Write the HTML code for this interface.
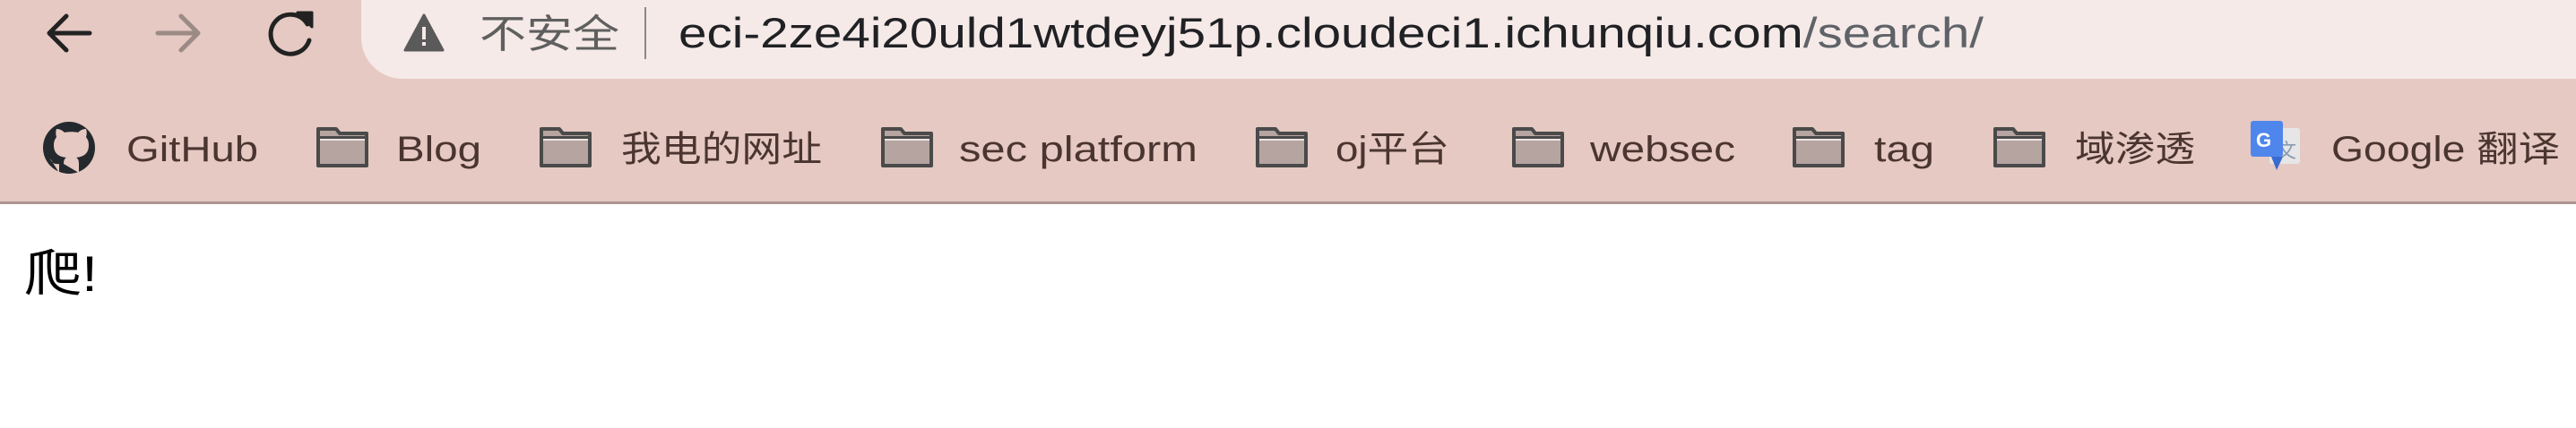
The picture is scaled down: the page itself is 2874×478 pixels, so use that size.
<!DOCTYPE html>
<html><head><meta charset="utf-8"><style>
html,body{margin:0;padding:0;width:2874px;height:478px;overflow:hidden;background:#fff}
svg{display:block}
text{font-family:"Liberation Sans","Noto Sans CJK SC",sans-serif}
</style></head><body>
<svg width="2874" height="478" viewBox="0 0 2874 478" xmlns="http://www.w3.org/2000/svg">
<defs>
<g id="fold"><path d="M3 6 h20 l4 5 h30 v36 h-54 z" fill="#b6a4a0" stroke="#4a4a4a" stroke-width="4" stroke-linejoin="round"/><path d="M3 16 h54" stroke="#4a4a4a" stroke-width="4"/><path d="M5 18 h50" stroke="#efe4e1" stroke-width="2"/></g>
</defs>
<rect x="0" y="0" width="2874" height="227" fill="#e5c9c2"/>
<rect x="0" y="225" width="2874" height="3" fill="#ad9691"/>
<!-- address bar -->
<rect x="403" y="-60" width="2600" height="148" rx="46" fill="#f5eae8"/>
<!-- nav icons -->
<g fill="none" stroke="#222" stroke-width="5" stroke-linecap="round" stroke-linejoin="round">
<path d="M100 37 H56 M74 18 L55 37 L74 56"/>
</g>
<g fill="none" stroke="#9c8a86" stroke-width="5" stroke-linecap="round" stroke-linejoin="round">
<path d="M176 37 H220 M202 18 L221 37 L202 56"/>
</g>
<path d="M343 27 A22 22 0 1 0 345 45" fill="none" stroke="#222" stroke-width="5" stroke-linecap="round"/>
<path d="M332 14 L348 14 L348 30 Z" fill="#222" stroke="#222" stroke-width="3" stroke-linejoin="round"/>
<!-- warning -->
<path d="M473 17 L494 56 H452 Z" fill="#5a5a5a" stroke="#5a5a5a" stroke-width="3" stroke-linejoin="round"/>
<rect x="471" y="30" width="4" height="14" fill="#f5eae8"/>
<rect x="471" y="47" width="4" height="4" fill="#f5eae8"/>
<text x="535" y="53" font-size="44" fill="#5f5f5f" textLength="156" lengthAdjust="spacingAndGlyphs">不安全</text>
<rect x="719" y="8" width="2" height="58" fill="#888"/>
<text x="757" y="53" font-size="47" fill="#202124" textLength="1456" lengthAdjust="spacingAndGlyphs"><tspan>eci-2ze4i20uld1wtdeyj51p.cloudeci1.ichunqiu.com</tspan><tspan fill="#5f6368">/search/</tspan></text>
<!-- bookmarks -->
<circle cx="77" cy="165" r="29" fill="#24292e"/>
<path d="M66 193 v-10 c-7 1 -9 -3 -10 -6 M88 193 v-10 c0-4 -1-6 -3-7 c8-1 14-4 14-14 c0-4 -1-6 -3-9 c1-3 1-6 0-9 c-3 0 -6 1-9 4 c-4-1 -11-1 -15 0 c-3-3 -6-4 -9-4 c-1 3-1 6 0 9 c-2 3-3 5-3 9 c0 10 6 13 14 14 c-2 1-3 3-3 7" fill="#e5c9c2"/>
<g font-size="40" fill="#4b3530">
<text x="141" y="180" textLength="147" lengthAdjust="spacingAndGlyphs">GitHub</text>
<use href="#fold" x="352" y="138"/>
<text x="442" y="180" textLength="95" lengthAdjust="spacingAndGlyphs">Blog</text>
<use href="#fold" x="601" y="138"/>
<text x="693" y="180" textLength="224" lengthAdjust="spacingAndGlyphs">我电的网址</text>
<use href="#fold" x="982" y="138"/>
<text x="1070" y="180" textLength="266" lengthAdjust="spacingAndGlyphs">sec platform</text>
<use href="#fold" x="1400" y="138"/>
<text x="1490" y="180" textLength="127" lengthAdjust="spacingAndGlyphs">oj平台</text>
<use href="#fold" x="1686" y="138"/>
<text x="1774" y="180" textLength="162" lengthAdjust="spacingAndGlyphs">websec</text>
<use href="#fold" x="1999" y="138"/>
<text x="2091" y="180" textLength="67" lengthAdjust="spacingAndGlyphs">tag</text>
<use href="#fold" x="2223" y="138"/>
<text x="2315" y="180" textLength="134" lengthAdjust="spacingAndGlyphs">域渗透</text>
<rect x="2532" y="143" width="34" height="40" rx="3" fill="#e6e6e6"/>
<text x="2540" y="176" font-size="22" fill="#8a9bb0">文</text>
<rect x="2511" y="135" width="36" height="40" rx="3" fill="#4f86ec"/>
<path d="M2534 175 L2540 190 L2547 175 Z" fill="#3a6bd0"/>
<text x="2517" y="164" font-size="22" font-weight="bold" fill="#fff">G</text>
<text x="2601" y="180" textLength="255" lengthAdjust="spacingAndGlyphs">Google 翻译</text>
</g>
<!-- body -->
<text x="27" y="325" font-size="56" fill="#000" textLength="82" lengthAdjust="spacingAndGlyphs">爬!</text>
</svg>
</body></html>
